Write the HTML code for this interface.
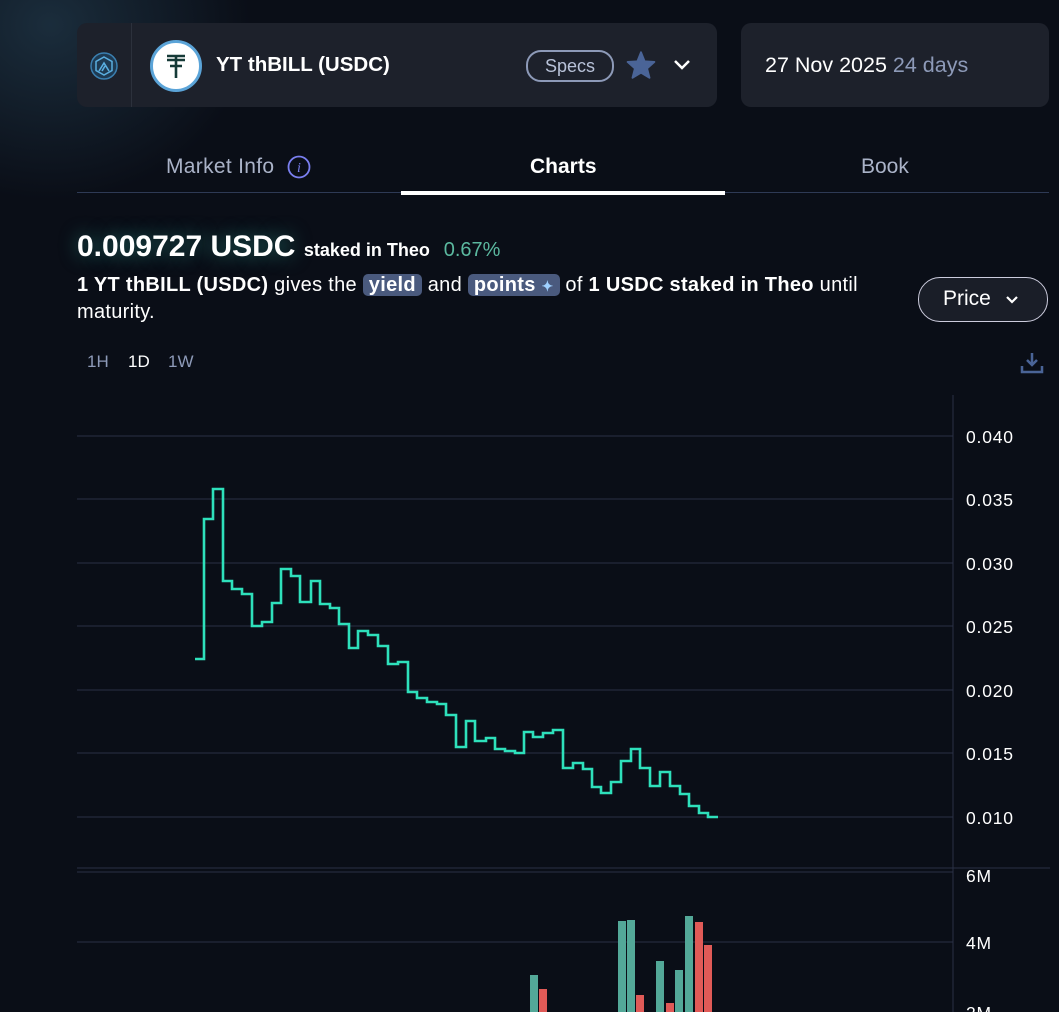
<!DOCTYPE html>
<html><head><style>
body{margin:0;width:1059px;height:1012px;overflow:hidden;background:#0a0e17;font-family:"Liberation Sans",sans-serif;color:#fff;position:relative}
.glow{position:absolute;left:-150px;top:-150px;width:400px;height:350px;background:radial-gradient(closest-side,rgba(40,70,90,.55),rgba(10,14,23,0));}
.card{position:absolute;background:#1d212b;border-radius:10px}
.abs{position:absolute;white-space:nowrap}
.tag{background:#4a5a7e;border-radius:5px;padding:0 6px;font-weight:bold}
</style></head><body>
<div class="glow"></div>
<div class="card" style="left:77px;top:23px;width:640px;height:84px">
  <div class="abs" style="left:54px;top:0;width:1px;height:84px;background:#2c313c"></div>
  <svg class="abs" style="left:13px;top:29px" width="28" height="28" viewBox="0 0 28 28"><circle cx="14" cy="14" r="13" fill="#1e3a52" stroke="#3a7fb0" stroke-width="1.5"/><path d="M14 5 L22 9.5 V18.5 L14 23 L6 18.5 V9.5Z" fill="none" stroke="#5aaee0" stroke-width="1.5"/><path d="M9 19 L14 11 L19 19 M12 19 L15 14" fill="none" stroke="#5aaee0" stroke-width="1.6"/></svg>
  <div class="abs" style="left:73px;top:17px;width:52px;height:52px;border-radius:50%;background:#fff;border:3px solid #5ba4d8;box-sizing:border-box"></div>
  <svg class="abs" style="left:88px;top:30px" width="22" height="26" viewBox="0 0 22 26"><path d="M2 3H20M2 7H20M11 3V25M5 13H17" fill="none" stroke="#163a38" stroke-width="2.6"/></svg>
  <div class="abs" style="left:139px;top:30px;font-weight:bold;font-size:20.5px">YT thBILL (USDC)</div>
  <div class="abs" style="left:449px;top:27px;width:84px;height:28px;border:2px solid #8d9ab8;border-radius:15px;color:#b8c2d8;font-size:18px;text-align:center;line-height:28px">Specs</div>
  <svg class="abs" style="left:549px;top:28px" width="30" height="28" viewBox="0 0 24 23"><path d="M12 1 L15 8.5 L23 9 L17 14.3 L19 22 L12 17.8 L5 22 L7 14.3 L1 9 L9 8.5Z" fill="#4a6497" stroke="#4a6497" stroke-linejoin="round" stroke-width="1.5"/></svg>
  <svg class="abs" style="left:596px;top:35px" width="18" height="14" viewBox="0 0 18 14"><path d="M2 3 L9 10 L16 3" fill="none" stroke="#fff" stroke-width="2.5"/></svg>
</div>
<div class="card" style="left:741px;top:23px;width:308px;height:84px">
  <div class="abs" style="left:24px;top:30px;font-size:21.5px">27 Nov 2025 <span style="color:#8d9ab8">24 days</span></div>
</div>
<div class="abs" style="left:166px;top:155px;font-size:21px;color:#aab3c8;letter-spacing:.3px">Market Info</div>
<svg class="abs" style="left:287px;top:155px" width="24" height="24"><circle cx="12" cy="12" r="10.5" fill="none" stroke="#7a7ff0" stroke-width="1.8"/><text x="12" y="17" font-size="14" font-style="italic" text-anchor="middle" fill="#7a7ff0" font-family="Liberation Serif">i</text></svg>
<div class="abs" style="left:530px;top:155px;font-size:21px;font-weight:bold">Charts</div>
<div class="abs" style="left:861px;top:155px;font-size:21px;color:#aab3c8">Book</div>
<div class="abs" style="left:77px;top:192px;width:972px;height:1px;background:#2e3a55"></div>
<div class="abs" style="left:401px;top:191px;width:324px;height:4px;background:#fff"></div>
<div class="abs" style="left:77px;top:230px;font-size:30px;font-weight:bold;text-shadow:0 0 18px rgba(60,200,180,.5)">0.009727 USDC <span style="font-size:18px;text-shadow:none">staked in Theo</span> <span style="font-size:20px;font-weight:normal;color:#5bb89f;text-shadow:none">&nbsp;0.67%</span></div>
<div class="abs" style="left:77px;top:272px;font-size:20px;letter-spacing:.3px;line-height:26px;white-space:normal;width:830px"><b>1 YT thBILL (USDC)</b> gives the <span class="tag">yield</span> and <span class="tag">points <span style="color:#9fd0ff;font-size:14px">✦</span></span> of <b>1 USDC staked in Theo</b> until maturity.</div>
<div class="abs" style="left:918px;top:277px;width:130px;height:45px;box-sizing:border-box;border:1.5px solid #ccd;border-radius:22px;background:#1a1e28;font-size:21px;line-height:42px;padding-left:24px">Price <svg width="14" height="10" style="margin-left:8px"><path d="M2 2 L7 7 L12 2" fill="none" stroke="#fff" stroke-width="2.2"/></svg></div>
<div class="abs" style="left:87px;top:352px;font-size:17px;color:#8d9ab8">1H</div>
<div class="abs" style="left:128px;top:352px;font-size:17px;color:#fff">1D</div>
<div class="abs" style="left:168px;top:352px;font-size:17px;color:#8d9ab8">1W</div>
<svg class="abs" style="left:1019px;top:350px" width="26" height="26"><path d="M13 3 V15 M8 10 L13 15 L18 10 M3 16 V22 H23 V16" fill="none" stroke="#4a6497" stroke-width="2.5"/></svg>
<svg class="abs" style="left:0;top:0" width="1059" height="1012">
<g stroke="#2a3046" stroke-width="1">
<line x1="77" x2="953" y1="436" y2="436"/><line x1="77" x2="953" y1="499" y2="499"/><line x1="77" x2="953" y1="563" y2="563"/><line x1="77" x2="953" y1="626" y2="626"/><line x1="77" x2="953" y1="690" y2="690"/><line x1="77" x2="953" y1="753" y2="753"/><line x1="77" x2="953" y1="817" y2="817"/>
<line x1="77" x2="1050" y1="868" y2="868"/><line x1="77" x2="953" y1="872" y2="872"/><line x1="77" x2="953" y1="942" y2="942"/>
<line x1="953" x2="953" y1="395" y2="1012"/>
</g>
<path fill="none" stroke="#2ee0bb" stroke-width="2.6" d="M195 659H204V519H213V489H223V581H232V589H242V594H252V626H262V622H272V603H281V569H291V576H300V602H311V581H320V604H330V608H339V624H349V648H358V631H368V635H378V646H388V664H398V662H408V692H417V698H427V702H437V704H446V715H456V747H466V721H475V741H486V738H495V749H505V751H515V753H524V732H533V737H543V733H553V730H563V768H573V763H583V769H592V787H601V793H611V782H621V761H631V749H640V768H650V786H660V772H670V786H680V794H689V806H699V813H708V817H718"/>
<g fill="#53a898"><rect x="530" y="975" width="8" height="40"/><rect x="618" y="921" width="8" height="95"/><rect x="627" y="920" width="8" height="95"/><rect x="656" y="961" width="8" height="55"/><rect x="675" y="970" width="8" height="45"/><rect x="685" y="916" width="8" height="100"/></g>
<g fill="#e05a57"><rect x="539" y="989" width="8" height="30"/><rect x="636" y="995" width="8" height="20"/><rect x="666" y="1003" width="8" height="12"/><rect x="695" y="922" width="8" height="95"/><rect x="704" y="945" width="8" height="70"/></g>
<g fill="#fff" font-family="Liberation Sans" font-size="17.5" letter-spacing="0.8">
<text x="966" y="443">0.040</text><text x="966" y="506">0.035</text><text x="966" y="570">0.030</text><text x="966" y="633">0.025</text><text x="966" y="697">0.020</text><text x="966" y="760">0.015</text><text x="966" y="824">0.010</text>
<text x="966" y="882">6M</text><text x="966" y="949">4M</text><text x="966" y="1019">2M</text>
</g>
</svg>
</body></html>
